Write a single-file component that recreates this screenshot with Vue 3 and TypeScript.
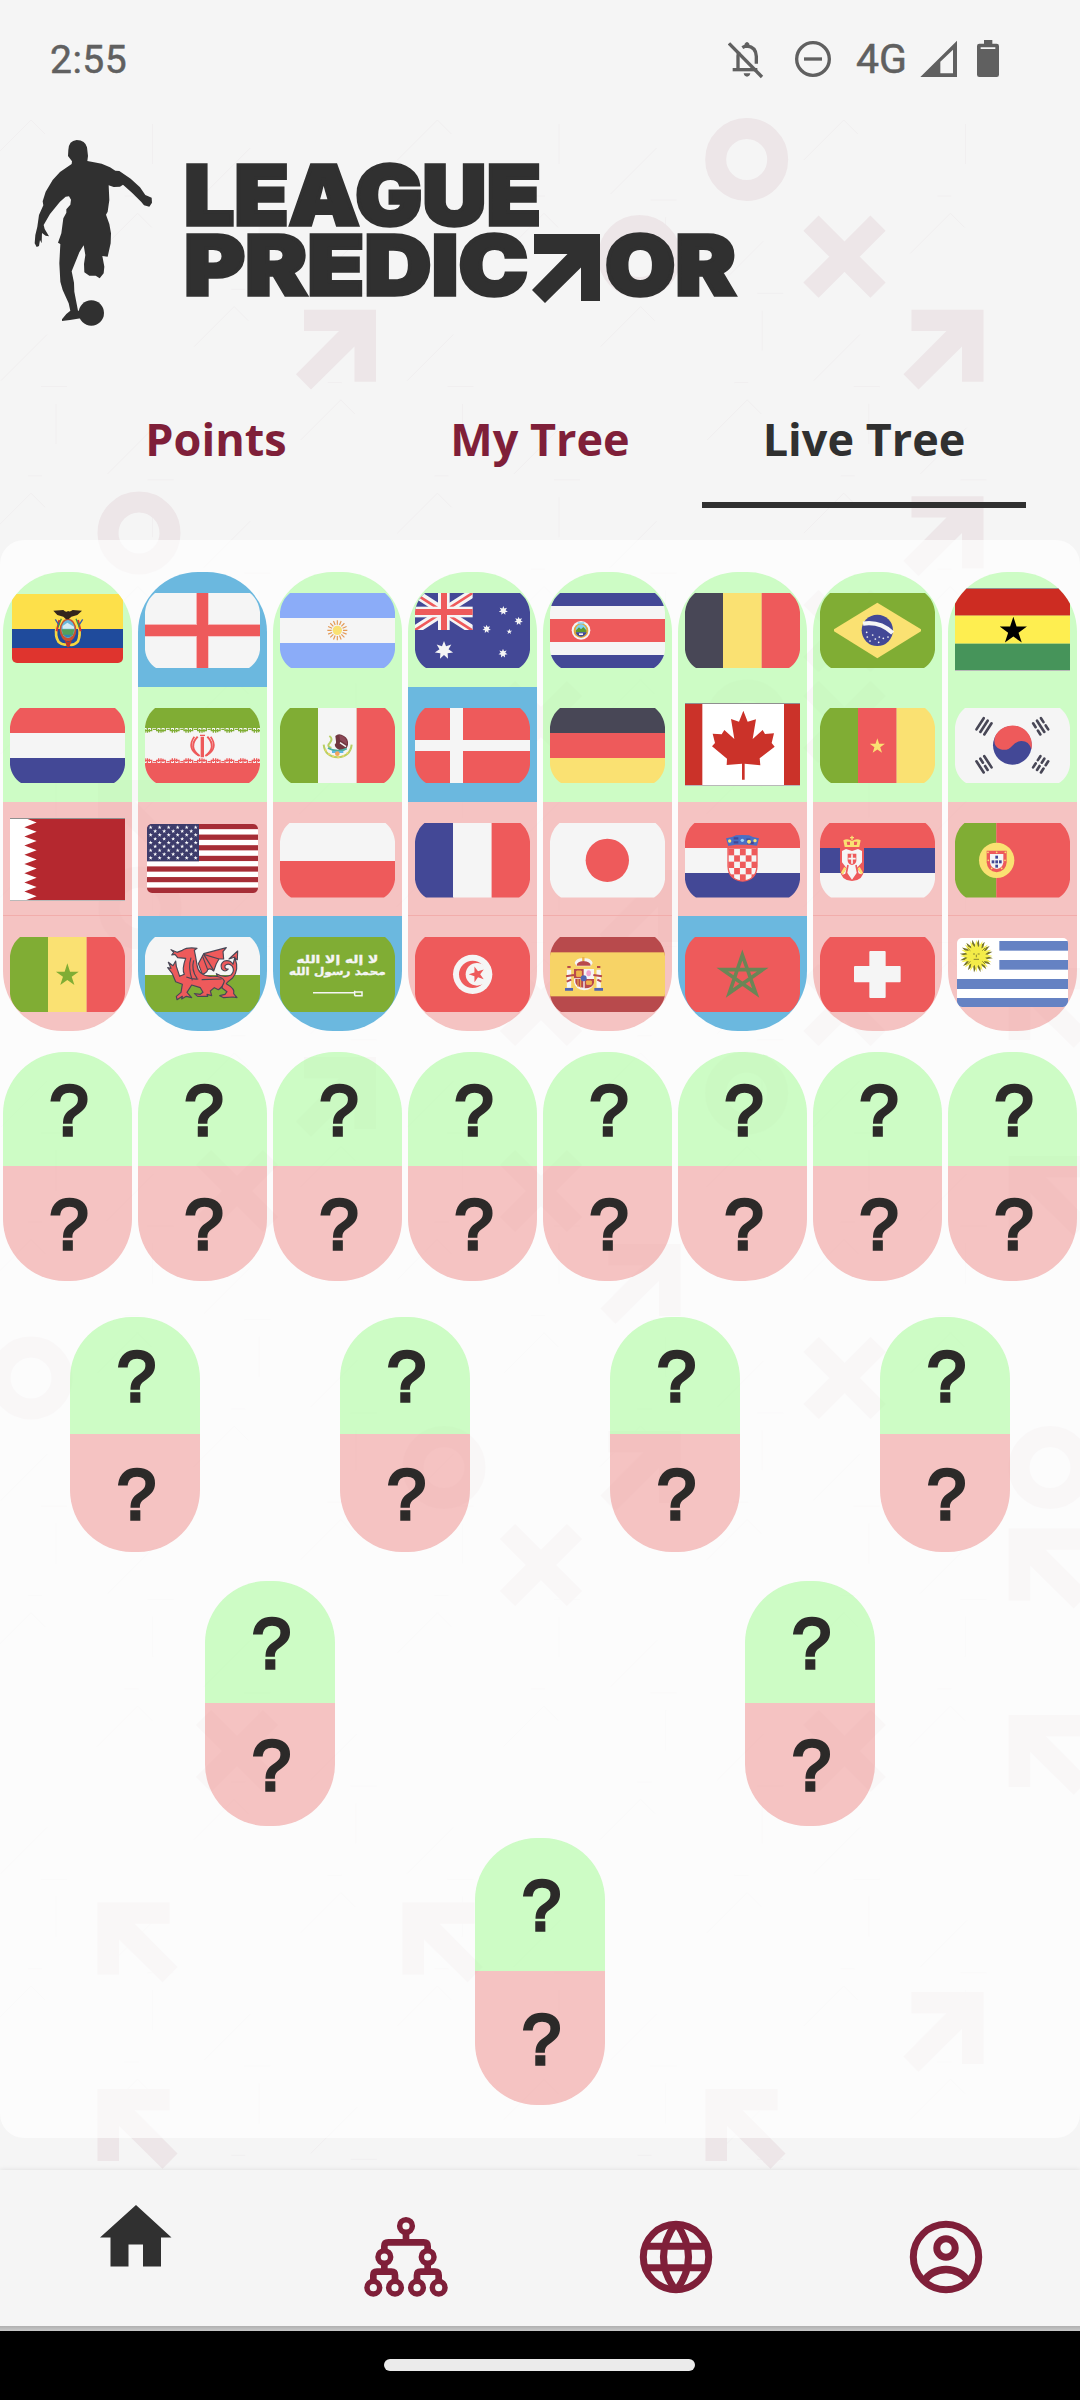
<script setup lang="ts">
type Tone = 'win' | 'out' | 'live'
interface FlagArt { w: number; h: number; art: string; kind: 'cut' | 'full' | 'round' }
interface Slot { flag: string; tone: Tone }

const RED = '#ee5a5b'
const NAVY = '#434896'
const GREEN = '#80ad34'
const YELLOW = '#fae172'
const WHITE = '#f5f5f5'
const INK = '#484756'

const rect = (x: number, y: number, w: number, h: number, fill: string) =>
  `<rect x="${x}" y="${y}" width="${w}" height="${h}" fill="${fill}"/>`

const disc = (x: number, y: number, r: number, fill: string) =>
  `<circle cx="${x}" cy="${y}" r="${r}" fill="${fill}"/>`

const stripesH = (...colors: string[]) =>
  colors.map((c, i) => rect(0, i * 75, 345, 75, c)).join('')

const stripesV = (...colors: string[]) =>
  colors.map((c, i) => rect([0, 114, 230][i], 0, 116, 225, c)).join('')

function star(cx: number, cy: number, r: number, fill: string, n = 5, inner = 0.382, turn = -90): string {
  const pts: string[] = []
  for (let i = 0; i < n * 2; i++) {
    const a = ((turn + (i * 180) / n) * Math.PI) / 180
    const d = i % 2 ? r * inner : r
    pts.push(`${(cx + d * Math.cos(a)).toFixed(1)},${(cy + d * Math.sin(a)).toFixed(1)}`)
  }
  return `<polygon points="${pts.join(' ')}" fill="${fill}"/>`
}

const cut = (art: string): FlagArt => ({ w: 345, h: 225, art, kind: 'cut' })
const full = (art: string): FlagArt => ({
  w: 345,
  h: 249,
  art: art + rect(0, 0, 345, 3, '#8f8f8f') + rect(0, 246, 345, 3, '#b9b9b9'),
  kind: 'full',
})
const soft = (art: string): FlagArt => ({ w: 333, h: 207, art, kind: 'round' })

const usStripes = Array.from({ length: 13 }, (_, i) => rect(0, i * 15.92, 333, 16, i % 2 ? '#fff' : '#a62d36')).join('')
const usStars = Array.from({ length: 9 }, (_, r) =>
  Array.from({ length: r % 2 ? 5 : 6 }, (_, c) => star(11 + (r % 2 ? 13.5 : 0) + c * 27, 10 + r * 11.5, 6.5, '#fff')).join(''),
).join('')

const qatarTeeth = (() => {
  let d = 'M0,0H45'
  for (let i = 0; i < 9; i++) d += `L80,${(i * 27.6 + 13.8).toFixed(1)}L43,${((i + 1) * 27.6).toFixed(1)}`
  return `<path d="${d}V249H0Z" fill="#fff"/>`
})()

const checker = Array.from({ length: 25 }, (_, i) =>
  i % 2 ? '' : rect(130 + (i % 5) * 17.4, 78 + Math.floor(i / 5) * 19, 17.4, 19, RED),
).join('')

const iranFringe = (y: number, c: string, s: number) =>
  Array.from({ length: 9 }, (_, i) => {
    const x = i * 41 - 6
    return `<path d="M${x},${y}v${8 * s}h26v${-8 * s}M${x + 6},${y + 3 * s}v${11 * s}M${x + 13},${y}v${14 * s}M${x + 19},${y + 3 * s}v${10 * s}M${x + 30},${y + 4 * s}h9" stroke="${c}" stroke-width="4" fill="none"/>`
  }).join('')

const sunRays = Array.from({ length: 16 }, (_, i) =>
  `<path d="M172,95V82" transform="rotate(${i * 22.5} 172 112)" stroke="#e39a55" stroke-width="3.5"/>`,
).join('')

const trigram = (x: number, y: number, angle: number, gaps: boolean[]) =>
  `<g transform="translate(${x} ${y}) rotate(${angle})" stroke="${INK}" stroke-width="8" stroke-linecap="round">` +
  gaps.map((g, i) => {
    const o = (i - 1) * 14
    return g ? `<path d="M${o},-20V-6M${o},6V20"/>` : `<path d="M${o},-20V20"/>`
  }).join('') + '</g>'

const flags: Record<string, FlagArt> = {
  ecuador: soft(
    rect(0, 0, 333, 105, '#fde04a') + rect(0, 105, 333, 57, '#1f4b9c') + rect(0, 162, 333, 45, '#df342e') +
    '<path d="M134,98q-6,28 6,46q14,12 27,6q16,8 31,-8q8,-20 3,-44" fill="none" stroke="#f6d640" stroke-width="8"/>' +
    '<path d="M142,78l-8,34M198,78l8,34" stroke="#d9342b" stroke-width="6"/><path d="M148,74l-10,26M192,74l10,26" stroke="#3c8f4a" stroke-width="4"/><path d="M130,76l10,16M212,76l-10,16" stroke="#3a5fa8" stroke-width="4"/>' +
    '<ellipse cx="168" cy="108" rx="25" ry="34" fill="#c8512f"/><ellipse cx="168" cy="105" rx="20" ry="27" fill="#69b6da"/>' +
    '<path d="M149,106h38l-4,16q-14,14 -30,0z" fill="#53a05b"/><path d="M152,96l14,-10l20,12v6h-34z" fill="#d6ecf3"/><path d="M156,122h24l-8,8h-10z" fill="#2f87b8"/>' +
    '<path d="M124,50l30,-2q8,8 14,3q6,4 14,-3l28,2l-14,13l-18,5l-8,8h-8l-8,-8l-18,-5z" fill="#33251c"/>' +
    '<path d="M158,138l10,6l12,-6l-8,22h-7z" fill="#b93528"/>'),
  england: cut(rect(0, 0, 345, 225, WHITE) + rect(153, 0, 38, 225, '#f6b4b5') + rect(0, 93, 345, 38, '#f6b4b5') + rect(156, 0, 33, 225, RED) + rect(0, 96, 345, 33, RED)),
  argentina: cut(stripesH('#8bacf8', WHITE, '#8bacf8') + sunRays + disc(172, 112, 14, YELLOW)),
  australia: cut(
    rect(0, 0, 345, 225, NAVY) +
    `<svg width="173" height="111" viewBox="0 0 173 111"><path d="M0,0L173,111M173,0L0,111" stroke="${WHITE}" stroke-width="26"/><path d="M0,2L173,113M173,0L0,111" stroke="${RED}" stroke-width="8"/></svg>` +
    rect(69, 0, 35, 111, WHITE) + rect(0, 41, 173, 32, WHITE) + rect(78, 0, 18, 111, RED) + rect(0, 48, 173, 18, RED) +
    star(87, 172, 28, WHITE, 7, 0.5) + star(265, 53, 14, WHITE, 7, 0.5) + star(311, 84, 13, WHITE, 7, 0.5) +
    star(215, 108, 13, WHITE, 7, 0.5) + star(283, 116, 9, WHITE) + star(264, 181, 14, WHITE, 7, 0.5)),
  costarica: cut(
    rect(0, 0, 345, 225, WHITE) + rect(0, 0, 345, 39, NAVY) + rect(0, 186, 345, 39, NAVY) + rect(0, 78, 345, 69, RED) +
    disc(93, 112, 28, WHITE) + disc(93, 113, 22, '#dfa83e') + disc(93, 110, 16, '#7fd0f2') +
    '<path d="M78,112l9,-9l6,6l7,-7l9,10v6H78z" fill="#5f9a2e"/><path d="M77,118h33q-4,12 -17,13q-13,-1 -16,-13z" fill="#434896"/>' + rect(87, 121, 12, 5, WHITE) + rect(83, 88, 20, 4, '#7fd0f2')),
  belgium: cut(stripesV(INK, YELLOW, RED)),
  brazil: cut(
    rect(0, 0, 345, 225, GREEN) + `<path d="M172,29L303,109V115L172,196L42,115V109Z" fill="${YELLOW}"/>` + disc(172, 112, 47, NAVY) +
    `<path d="M129,92Q180,84 218,120" stroke="${WHITE}" stroke-width="13" fill="none"/>` +
    [[140, 118], [142, 132], [158, 126], [166, 138], [178, 132], [190, 136], [176, 148], [204, 132], [150, 144]].map(([x, y]) => disc(x, y, 2.6, WHITE)).join('')),
  ghana: full(rect(0, 0, 345, 83, '#cd2c22') + rect(0, 83, 345, 84, '#feee50') + rect(0, 167, 345, 82, '#46945a') + star(175, 129, 43, '#000')),
  netherlands: cut(stripesH(RED, WHITE, NAVY)),
  iran: cut(
    rect(0, 0, 345, 225, WHITE) + rect(0, 0, 345, 60, GREEN) + rect(0, 165, 345, 60, RED) + iranFringe(60, GREEN, 1) + iranFringe(165, RED, -1) +
    `<g stroke="${RED}" fill="none"><path d="M172,86V148" stroke-width="10"/><path d="M158,86q-30,32 6,58M187,86q30,32 -6,58" stroke-width="6"/><path d="M148,86q-24,34 12,56M197,86q24,34 -12,56" stroke-width="5"/><path d="M165,82h15" stroke-width="4"/></g>`),
  mexico: cut(
    stripesV(GREEN, WHITE, RED) +
    '<path d="M131,110q4,36 42,38q38,-2 42,-38" fill="none" stroke="#b8cf63" stroke-width="6"/><path d="M136,124q12,22 37,24q25,-2 37,-24" fill="none" stroke="#f3d768" stroke-width="5" stroke-dasharray="6 9"/>' +
    '<path d="M148,84q12,8 2,20q-12,10 4,16" stroke="#b8cf63" stroke-width="6" fill="none"/><path d="M166,84q10,-10 26,0q14,8 12,26q-4,16 -16,18q-22,-4 -24,-18q6,-4 4,-10z" fill="#70363f"/><path d="M178,82q22,2 24,28l-22,-14z" fill="#8b4857"/><path d="M180,104l18,12" stroke="#f5f5f5" stroke-width="4"/>' +
    '<path d="M144,120q28,16 56,2" stroke="#4cae9f" stroke-width="6" fill="none"/><path d="M156,132h34" stroke="#5eb7e4" stroke-width="6"/>' + disc(172, 137, 7, '#f2a45c')),
  denmark: cut(rect(0, 0, 345, 225, RED) + rect(105, 0, 39, 225, WHITE) + rect(0, 96, 345, 33, WHITE)),
  germany: cut(stripesH(INK, RED, YELLOW)),
  canada: full(
    rect(0, 0, 345, 249, '#fff') + rect(0, 0, 52, 249, '#cb3229') + rect(297, 0, 48, 249, '#cb3229') +
    '<path d="M175,23L188,56L213,49L203,108L233,81L240,93L267,91L260,120L269,131L224,166L226,187L179,182V230H171V182L125,186L126,167L81,130L90,120L83,92L110,94L118,81L148,108L138,48L162,56Z" fill="#cb3229"/>'),
  cameroon: cut(stripesV(GREEN, RED, YELLOW) + star(172, 115, 24, YELLOW)),
  korea: cut(
    rect(0, 0, 345, 225, WHITE) + disc(172, 112, 58, NAVY) +
    `<path d="M120,86A58,58 0 0 1 229,124Q222,98 198,99Q183,101 172,113Q158,130 136,124Q112,114 120,86Z" fill="${RED}"/>` +
    trigram(87, 55, 33, [false, false, false]) + trigram(257, 55, -33, [true, false, true]) +
    trigram(87, 169, -33, [false, true, false]) + trigram(257, 169, 33, [true, true, true])),
  qatar: full(rect(0, 0, 345, 249, '#b5282f') + qatarTeeth),
  usa: soft(usStripes + rect(0, 0, 156, 112, '#3d3c6b') + usStars),
  poland: cut(rect(0, 0, 345, 114, WHITE) + rect(0, 114, 345, 111, RED)),
  france: cut(stripesV(NAVY, WHITE, RED)),
  japan: cut(rect(0, 0, 345, 225, WHITE) + disc(172, 112, 65, RED)),
  croatia: cut(
    stripesH(RED, WHITE, NAVY) + `<clipPath id="hr"><path d="M129,75H216V130Q214,172 173,174Q131,172 129,130Z"/></clipPath><g clip-path="url(#hr)">${rect(129, 75, 90, 100, WHITE)}${checker}</g>` +
    `<path d="M129,75H216V130Q214,172 173,174Q131,172 129,130Z" fill="none" stroke="${RED}" stroke-width="4"/>` +
    '<path d="M123,46l18,-4l12,-5l19,-1l20,1l12,5l18,4l-6,22l-24,-3h-40l-22,4z" fill="#4a6fc5"/><path d="M146,46h14M146,58h14M184,50h12M186,60h20" stroke="#434896" stroke-width="7"/>' +
    disc(134, 54, 5, YELLOW) + disc(172, 52, 5, '#9dd0f4') + disc(192, 56, 6, YELLOW) + disc(210, 53, 5, YELLOW)),
  serbia: cut(
    stripesH(RED, NAVY, WHITE) + `<path d="M60,75H132V140Q130,172 96,174Q62,172 60,140Z" fill="${RED}"/>` +
    `<path d="M66,84l12,-6l18,6l18,-6l12,6v34l-16,18l16,18l-16,-4l-14,20l-14,-20l-16,6l14,-20l-14,-18z" fill="${WHITE}"/>` +
    `<path d="M83,92h26v22q-2,10 -13,12q-11,-2 -13,-12z" fill="${RED}"/><path d="M96,94v28M85,107h22" stroke="${WHITE}" stroke-width="5"/>` +
    `<path d="M76,134l-10,18M116,134l10,18" stroke="${YELLOW}" stroke-width="8"/><path d="M84,126l-6,30M108,126l6,30" stroke="${RED}" stroke-width="5"/>` +
    `<path d="M74,72l-4,-20q12,-8 26,2q14,-10 26,-2l-4,20z" fill="${YELLOW}"/><path d="M82,66l-2,-10h10v10zM102,66v-10h10l-2,10z" fill="${RED}"/><path d="M96,38v14M90,44h12" stroke="${YELLOW}" stroke-width="4"/>`),
  portugal: cut(
    rect(0, 0, 124, 225, GREEN) + rect(124, 0, 221, 225, RED) + disc(125, 112, 53, YELLOW) +
    `<path d="M95,83H155V118Q153,146 125,148Q97,146 95,118Z" fill="${RED}"/><path d="M105,93H145V118Q143,136 125,138Q107,136 105,118Z" fill="${WHITE}"/>` +
    [[125, 102], [125, 116], [125, 129], [114, 116], [136, 116]].map(([x, y]) => rect(x - 4, y - 4, 8, 9, NAVY)).join('') +
    [[99, 88], [125, 88], [151, 88], [100, 112], [150, 112], [110, 136], [140, 136]].map(([x, y]) => disc(x, y, 2.6, YELLOW)).join('')),
  senegal: cut(stripesV(GREEN, YELLOW, RED) + star(172, 115, 36, GREEN)),
  wales: cut(
    rect(0, 0, 345, 114, WHITE) + rect(0, 114, 345, 111, GREEN) +
    `<g fill="${RED}" stroke="${INK}" stroke-width="3.5" stroke-linejoin="round">` +
    '<path d="M232,150Q220,128 214,110Q238,124 258,114Q270,104 262,88Q250,76 240,86Q238,98 250,96Q240,108 230,96Q224,80 238,72Q256,68 264,82L270,60L252,66L278,42L277,68L270,64Q284,100 262,124Q246,136 244,140Q272,156 266,170L276,182L264,180L236,182L224,176L240,172L246,164L222,146Z"/>' +
    '<path d="M160,80L176,50L244,32L234,44L236,66L222,66Q212,80 206,102Q196,92 188,98Q186,108 172,112Z"/><path d="M176,52L206,100M176,52L222,66M172,56L188,98" fill="none"/>' +
    '<path d="M78,38L96,46L112,40Q126,30 156,34L148,40Q152,58 156,84Q160,116 196,118Q232,116 238,132Q234,150 220,158L208,152L196,162L200,176L186,172L188,178L158,178L148,170L166,172L174,166L166,152L140,144L126,166L140,182L124,178L110,186L112,178L96,188L94,178L108,166L112,142L92,134L82,110L68,92L78,94L70,76L84,86L92,72L94,88L104,118L118,112Q110,96 122,64L98,62L90,52L80,54L86,46Z"/>' +
    '<path d="M138,62Q128,92 142,130M146,70Q138,98 156,124M124,120Q144,128 160,126M170,128L230,126" fill="none"/></g>'),
  saudi: cut(
    rect(0, 0, 345, 225, GREEN) +
    '<g direction="rtl" text-anchor="middle" font-family="DejaVu Sans" font-weight="700" font-size="30" fill="#f5f5f5" stroke="#f5f5f5" stroke-width="1"><text transform="translate(172 78) scale(1.38 1.05)">لا إله إلا الله</text><text transform="translate(172 114) scale(1.2 1.05)">محمد رسول الله</text></g>' +
    '<path d="M99,167H222M224,161V176M224,165h22v11h-22" stroke="#f5f5f5" stroke-width="4.5" fill="none"/>'),
  tunisia: cut(rect(0, 0, 345, 225, RED) + disc(173, 112, 59, WHITE) + disc(173, 112, 41, RED) + disc(186, 112, 34, WHITE) + star(186, 112, 25, RED, 5, 0.382, -180)),
  spain: cut(
    rect(0, 0, 345, 225, '#b84a4c') + rect(0, 46, 345, 132, '#f7d366') +
    '<path d="M74,78q4,-16 26,-14q24,-2 28,14l-6,10h-42z" fill="#f5f5f5"/><path d="M80,86q0,-12 20,-14q22,2 22,14z" fill="#b84a4c"/><path d="M100,60v12" stroke="#eeb34b" stroke-width="7"/>' +
    '<path d="M72,96H132V136Q128,160 102,160Q76,158 72,136Z" fill="#f5f5f5"/><path d="M72,96h29v28h-29zM76,126h24v26q-22,-2 -24,-16zM104,126h28v12q-4,16 -28,16z" fill="#b84a4c"/><path d="M80,102h14v16h-14zM84,126v24M92,126v26M110,132h14v10h-14z" fill="#eeb34b" stroke="#eeb34b" stroke-width="3"/><ellipse cx="116" cy="109" rx="7" ry="9" fill="#efa3cf"/>' +
    disc(101, 124, 9, '#5266b2') + '<path d="M57,98v54M146,98v54" stroke="#f5f5f5" stroke-width="13"/><path d="M52,90h10M141,90h10M48,118l24,-4M130,114l26,4M50,134l14,-6M142,128l12,6" stroke="#b84a4c" stroke-width="6"/><path d="M45,157h24M133,157h26" stroke="#5266b2" stroke-width="8"/>'),
  morocco: cut(rect(0, 0, 345, 225, RED) + '<path d="M172,54L212,168L112,98H233L133,168Z" fill="none" stroke="#6a8656" stroke-width="11" stroke-miterlimit="10"/>'),
  switzerland: cut(rect(0, 0, 345, 225, RED) + `<path d="M151,42H194Q197,42 197,45V87H239Q242,87 242,90V133Q242,136 239,136H197V180Q197,183 194,183H151Q148,183 148,180V136H105Q102,136 102,133V90Q102,87 105,87H148V45Q148,42 151,42Z" fill="${WHITE}"/>`),
  uruguay: soft(
    rect(0, 0, 333, 207, '#fff') + rect(127, 9, 206, 29, '#6582c3') + rect(127, 66, 206, 29, '#6582c3') + rect(0, 123, 333, 30, '#6582c3') + rect(0, 180, 333, 27, '#6582c3') +
    star(58, 54, 50, '#77752c', 16, 0.6, -82) + star(58, 54, 49, '#f7ef4c', 16, 0.55) + disc(58, 54, 26, '#f4ec48') +
    '<g stroke="#77752c" stroke-width="2.5"><path d="M48,48h6M62,48h6M58,50v8M50,64h16M40,38l-8,-8M76,38l8,-8M40,70l-8,8M76,70l8,8"/></g>'),
}

const s = (flag: string, tone: Tone): Slot => ({ flag, tone })
const groups: Slot[][] = [
  [s('ecuador', 'win'), s('netherlands', 'win'), s('qatar', 'out'), s('senegal', 'out')],
  [s('england', 'live'), s('iran', 'win'), s('usa', 'out'), s('wales', 'live')],
  [s('argentina', 'win'), s('mexico', 'win'), s('poland', 'out'), s('saudi', 'live')],
  [s('australia', 'win'), s('denmark', 'live'), s('france', 'out'), s('tunisia', 'out')],
  [s('costarica', 'win'), s('germany', 'win'), s('japan', 'out'), s('spain', 'out')],
  [s('belgium', 'win'), s('canada', 'win'), s('croatia', 'out'), s('morocco', 'live')],
  [s('brazil', 'win'), s('cameroon', 'win'), s('serbia', 'out'), s('switzerland', 'out')],
  [s('ghana', 'win'), s('korea', 'win'), s('portugal', 'out'), s('uruguay', 'out')],
]

const rounds = [
  { name: 'r16', count: 8 },
  { name: 'r8', count: 4 },
  { name: 'r4', count: 2 },
  { name: 'r2', count: 1 },
]

const tabs = [
  { label: 'Points', active: false },
  { label: 'My Tree', active: false },
  { label: 'Live Tree', active: true },
]

const rings = [[746.7, 159.5], [639.5, 256.5], [139, 533], [747, 721], [140, 908], [746.6, 1093], [31, 1378], [444, 1467.5], [1050, 1467.5]]
const crosses = [[844.5, 256.7], [844.5, 631], [844.5, 722], [541, 722], [541, 1005], [844.5, 1005], [237, 1191], [541, 1191], [844.7, 1378], [541, 1565], [237, 1751], [844.7, 1751]]
const arrowsRight = [[304, 309.7], [911.5, 309.7], [911.5, 496.2], [607.5, 870], [304, 1057], [608.5, 1244], [608.5, 1431], [911.5, 1992]]
const arrowsLeft = [[98, 780], [1008.7, 968], [1008.7, 1156], [1008.7, 1528.6], [1008.7, 1715], [97.5, 1902.5], [402.5, 1902.5], [97.5, 2089], [705.5, 2089]]

// Hairline fragments of the larger background motif.
const traces = Array.from({ length: 22 }, (_, r) =>
  Array.from({ length: 10 }, (_, c) => {
    const x = 31 + c * 101.6 + (r % 2) * 5
    const y = 160 + r * 93.3
    const k = (r * 7 + c * 5) % 4
    if (k === 0) return `M${x - 40},${y}l40,-40l14,14`
    if (k === 1) return `M${x + 20},${y - 36}v40M${x - 8},${y + 36}h14`
    if (k === 2) return `M${x - 30},${y + 34}l46,-46M${x + 10},${y + 40}h26`
    return ''
  }).join(''),
).join('')
</script>

<template>
  <div class="screen">
    <svg class="backdrop" width="1080" height="2052" viewBox="0 118 1080 2052" aria-hidden="true">
      <path :d="traces" fill="none" stroke="#f1eff0" stroke-width="1" />
      <g fill="none" stroke="#ede6e8">
        <circle v-for="(p, i) in rings" :key="'o' + i" :cx="p[0]" :cy="p[1]" r="31" stroke-width="21" />
        <path v-for="(p, i) in crosses" :key="'x' + i" :transform="`translate(${p[0]} ${p[1]})`" d="M-33.5,-33.5L33.5,33.5M33.5,-33.5L-33.5,33.5" stroke-width="21.5" />
      </g>
      <g fill="#ede6e8">
        <path v-for="(p, i) in arrowsRight" :key="'r' + i" :transform="`translate(${p[0]} ${p[1]})`" d="M0,0H72V72H50.5V36.8L7,79.8L-8,64.5L35,21.2H0Z" />
        <path v-for="(p, i) in arrowsLeft" :key="'l' + i" :transform="`translate(${p[0] + 72} ${p[1]}) scale(-1 1)`" d="M0,0H72V72H50.5V36.8L7,79.8L-8,64.5L35,21.2H0Z" />
      </g>
    </svg>

    <header class="status">
      <span class="clock">2:55</span>
      <div class="indicators">
        <svg width="36" height="40" viewBox="84 60 108 120">
          <g fill="none" stroke="#606060" stroke-width="10">
            <path d="M87,73L186,174" />
            <path d="M98,152H172" />
            <path d="M114,150V110Q114,104 117,98" />
            <path d="M127,86Q135,81 141,81Q168,84 169,112V134" />
          </g>
          <path d="M134,84V74Q141,64 148,74V84ZM131,163H151Q149,173 141,173Q133,173 131,163Z" fill="#606060" />
        </svg>
        <svg class="dnd" width="38" height="40" viewBox="280 58 114 120">
          <circle cx="337" cy="118" r="49" fill="none" stroke="#606060" stroke-width="10" />
          <path d="M310,118H364" stroke="#606060" stroke-width="10" />
        </svg>
        <span class="network">4G</span>
        <svg class="signal" width="37" height="40" viewBox="660 60 111 120">
          <path d="M661,174L771,65V174ZM721,163H759V92L721,128Z" fill="#606060" fill-rule="evenodd" />
        </svg>
        <svg class="battery" width="22" height="40" viewBox="831 60 66 120">
          <path d="M852,63H877V74H890Q897,74 897,81V167Q897,174 890,174H838Q831,174 831,167V81Q831,74 838,74H852ZM842,85V90H886V85Z" fill="#606060" fill-rule="evenodd" />
        </svg>
      </div>
    </header>

    <div class="brand">
      <svg width="720" height="190" viewBox="30 138 720 190" fill="#303030">
        <g transform="translate(0 100) scale(.33333)">
          <path d="M205,150Q206,122 230,120Q256,121 261,142L264,168L262,183L282,187L305,191L330,202L346,212L358,213L392,236L420,262L436,285L455,293L456,308L448,320L432,316L424,306L396,278L369,254L360,260L341,261L326,256L328,300L323,335L318,344L328,372L333,400L332,430L323,470L307,468L313,500L311,520L299,535L287,527L268,527L253,517L252,492L256,465L251,436L238,457L215,514L222,548L223,575L234,632L240,632L242,655L210,660L186,663L186,658L199,642L211,632L206,610L188,570L181,545L178,490L181,432L174,428L184,400L190,355L199,338L199,328L211,314L213,299L207,289L197,290L180,305L150,342L131,375L134,387L147,409L137,407L126,399L125,430L120,420L117,438L110,441L104,430L106,405L112,380L117,345L130,316L128,304L137,275L158,240L180,216L215,192L216,184L204,168Z" />
          <circle cx="274" cy="639" r="38" />
        </g>
        <g class="wordmark">
          <text x="184" y="224.500" textLength="357" lengthAdjust="spacingAndGlyphs">LEAGUE</text>
          <text x="184" y="294.500" textLength="344" lengthAdjust="spacingAndGlyphs">PREDIC</text>
          <text x="605" y="294.500" textLength="131" lengthAdjust="spacingAndGlyphs">OR</text>
        </g>
        <path d="M534,234H600V301H581V267.500L545,303L532,290L567.500,254H534Z" />
      </svg>
    </div>

    <nav class="tabs">
      <a v-for="t in tabs" :key="t.label" class="tab" :class="{ active: t.active }">{{ t.label }}</a>
    </nav>

    <main class="panel">
      <section class="groups">
        <div v-for="(g, gi) in groups" :key="gi" class="group">
          <div v-for="slot in g" :key="slot.flag" class="slot" :class="slot.tone">
            <svg
              class="flag"
              :class="flags[slot.flag].kind"
              :width="flags[slot.flag].w / 3"
              :height="flags[slot.flag].h / 3"
              :viewBox="`0 0 ${flags[slot.flag].w} ${flags[slot.flag].h}`"
              v-html="flags[slot.flag].art"
            />
          </div>
        </div>
      </section>
      <section v-for="r in rounds" :key="r.name" class="round" :class="r.name">
        <div v-for="n in r.count" :key="n" class="seat">
          <div class="pill">
            <span class="half win">?</span>
            <span class="half out">?</span>
          </div>
        </div>
      </section>
    </main>

    <nav class="dock">
      <a class="item">
        <svg class="home" width="72" height="62" viewBox="0 0 72 62"><path d="M36,0L71.500,32.500H61V61.500H43V39.500H28.500V61.500H10.500V32.500H0Z" fill="#303030" /></svg>
      </a>
      <a class="item">
        <svg width="84" height="82" viewBox="70 79 252 246" fill="none" stroke="#7f1f39">
          <g stroke-width="16.500">
            <circle v-for="(p, i) in [[196, 109], [131, 202], [261, 202], [98, 294], [163, 294], [229, 294], [294, 294]]" :key="i" :cx="p[0]" :cy="p[1]" r="19" />
          </g>
          <path stroke-width="20" d="M196,131V158M131,180V170Q131,158 143,158H249Q261,158 261,170V180M131,224V246M261,224V246M98,272V257Q98,246 109,246H152Q163,246 163,257V272M229,272V257Q229,246 240,246H283Q294,246 294,257V272" />
        </svg>
      </a>
      <a class="item">
        <svg width="74" height="74" viewBox="-37 -37 74 74" fill="none" stroke="#7f1f39" stroke-width="7">
          <circle r="32.700" />
          <path d="M-31,-10.800H31M-31,10.800H31M0,-34Q-25,0 0,34M0,-34Q25,0 0,34" />
        </svg>
      </a>
      <a class="item">
        <svg width="74" height="74" viewBox="-37 -37 74 74" fill="none" stroke="#7f1f39" stroke-width="7">
          <circle r="32.700" />
          <circle cy="-9" r="9.200" />
          <path d="M-22,25C-14,8.300 14,8.300 22,25" stroke-width="7.500" />
        </svg>
      </a>
    </nav>
    <div class="edge" />
    <footer class="system"><span class="handle" /></footer>
  </div>
</template>

<style>
body {
  margin: 0;
  background: #f5f5f5;
}
</style>

<style scoped>
.screen {
  position: relative;
  display: flex;
  flex-direction: column;
  width: 1080px;
  height: 2400px;
  overflow: hidden;
  background: #f5f5f5;
}
.backdrop {
  position: absolute;
  left: 0;
  top: 118px;
}
.status,
.brand,
.tabs,
.panel,
.dock,
.edge,
.system {
  position: relative;
  flex: none;
  box-sizing: border-box;
}
.status {
  display: flex;
  justify-content: space-between;
  align-items: center;
  height: 118px;
  padding: 0 81px 0 50px;
  font-family: Roboto, sans-serif;
  color: #606060;
}
.clock {
  padding-top: 1px;
  font-size: 39px;
  letter-spacing: 0.5px;
  -webkit-text-stroke: 0.5px #606060;
}
.indicators {
  display: flex;
  align-items: center;
}
.dnd {
  margin-left: 30px;
}
.network {
  margin-left: 24px;
  width: 52px;
  font-size: 41px;
  -webkit-text-stroke: 0.5px #606060;
}
.signal {
  margin-left: 12px;
}
.battery {
  margin-left: 20px;
}
.brand {
  height: 190px;
  margin: 20px 0 0 30px;
}
.brand svg {
  display: block;
}
.wordmark {
  font-family: Inter, sans-serif;
  font-weight: 900;
  font-size: 83px;
  stroke: #303030;
  stroke-width: 3.5px;
}
.tabs {
  display: flex;
  height: 126px;
  margin: 54px 54px 0;
}
.tab {
  display: flex;
  flex: 1;
  align-items: center;
  justify-content: center;
  box-sizing: border-box;
  padding-bottom: 8px;
  border-bottom: 6px solid transparent;
  font-family: 'Open Sans', sans-serif;
  font-size: 45px;
  font-weight: 700;
  color: #7f1f39;
}
.tab.active {
  color: #303030;
  border-color: #303030;
}
.panel {
  height: 1598px;
  margin-top: 32px;
  padding-top: 32px;
  border-radius: 24px;
  background: rgba(255, 255, 255, 0.66);
}
.groups {
  display: flex;
  justify-content: space-between;
  padding: 0 3px;
}
.group {
  display: grid;
  grid-template-rows: 115px 115px 114px 115px;
  width: 129px;
  border-radius: 60px;
  overflow: hidden;
}
.slot {
  display: flex;
  align-items: center;
  justify-content: center;
  padding-top: 2px;
}
.win {
  background: rgba(158, 252, 142, 0.5);
}
.out {
  background: rgba(238, 138, 136, 0.5);
}
.live {
  background: #6bb8df;
}
.slot.out + .slot.out {
  box-shadow: 0 -1px 0 #f2adab;
}
.flag {
  display: block;
}
.flag.cut {
  clip-path: path('M0,19C1,11 4,5 10,0H105C111,5 114,11 115,19V57C114,65 110,71 104,75H11C5,71 1,65 0,57Z');
}
.flag.full {
  margin-top: -2px;
}
.flag.round {
  margin-top: -4px;
  border-radius: 5px;
}
.round {
  display: flex;
}
.flag.round {
  display: block;
}
.seat {
  display: flex;
  flex: 1;
  justify-content: center;
}
.pill {
  display: flex;
  flex-direction: column;
  width: 130px;
  border-radius: 62px;
  overflow: hidden;
}
.half {
  display: flex;
  flex: 1;
  align-items: center;
  justify-content: center;
  box-sizing: border-box;
  padding: 3px 0 0 3px;
  font-family: 'Liberation Sans', Arial, sans-serif;
  font-size: 70px;
  line-height: 1;
  color: #2c2a29;
  -webkit-text-stroke: 3.4px #2c2a29;
}
.half.win {
  flex: 0 0 calc(50% - 0.5px);
}
.r16 {
  margin-top: 21px;
}
.r16 .pill {
  width: 129px;
  height: 229px;
}
.r8 {
  margin-top: 36px;
}
.r8 .pill {
  height: 235px;
}
.r4 {
  margin-top: 29px;
}
.r4 .pill {
  height: 245px;
}
.r2 {
  margin-top: 12px;
}
.r2 .pill {
  height: 267px;
}
.dock {
  display: flex;
  height: 156px;
  margin-top: 32px;
  background: #f5f5f5;
  box-shadow: 0 0 5px rgba(0, 0, 0, 0.1);
}
.item {
  display: flex;
  flex: 1;
  align-items: center;
  justify-content: center;
  padding: 18px 0 0 1px;
}
.home {
  margin-bottom: 43px;
}
.edge {
  height: 5px;
  background: linear-gradient(#b0b0b0, #c8c8c8);
}
.system {
  display: flex;
  justify-content: center;
  height: 69px;
  padding: 28px 1px 0 0;
  background: #000;
}
.handle {
  width: 311px;
  height: 12px;
  border-radius: 6px;
  background: #ebebeb;
}
</style>
